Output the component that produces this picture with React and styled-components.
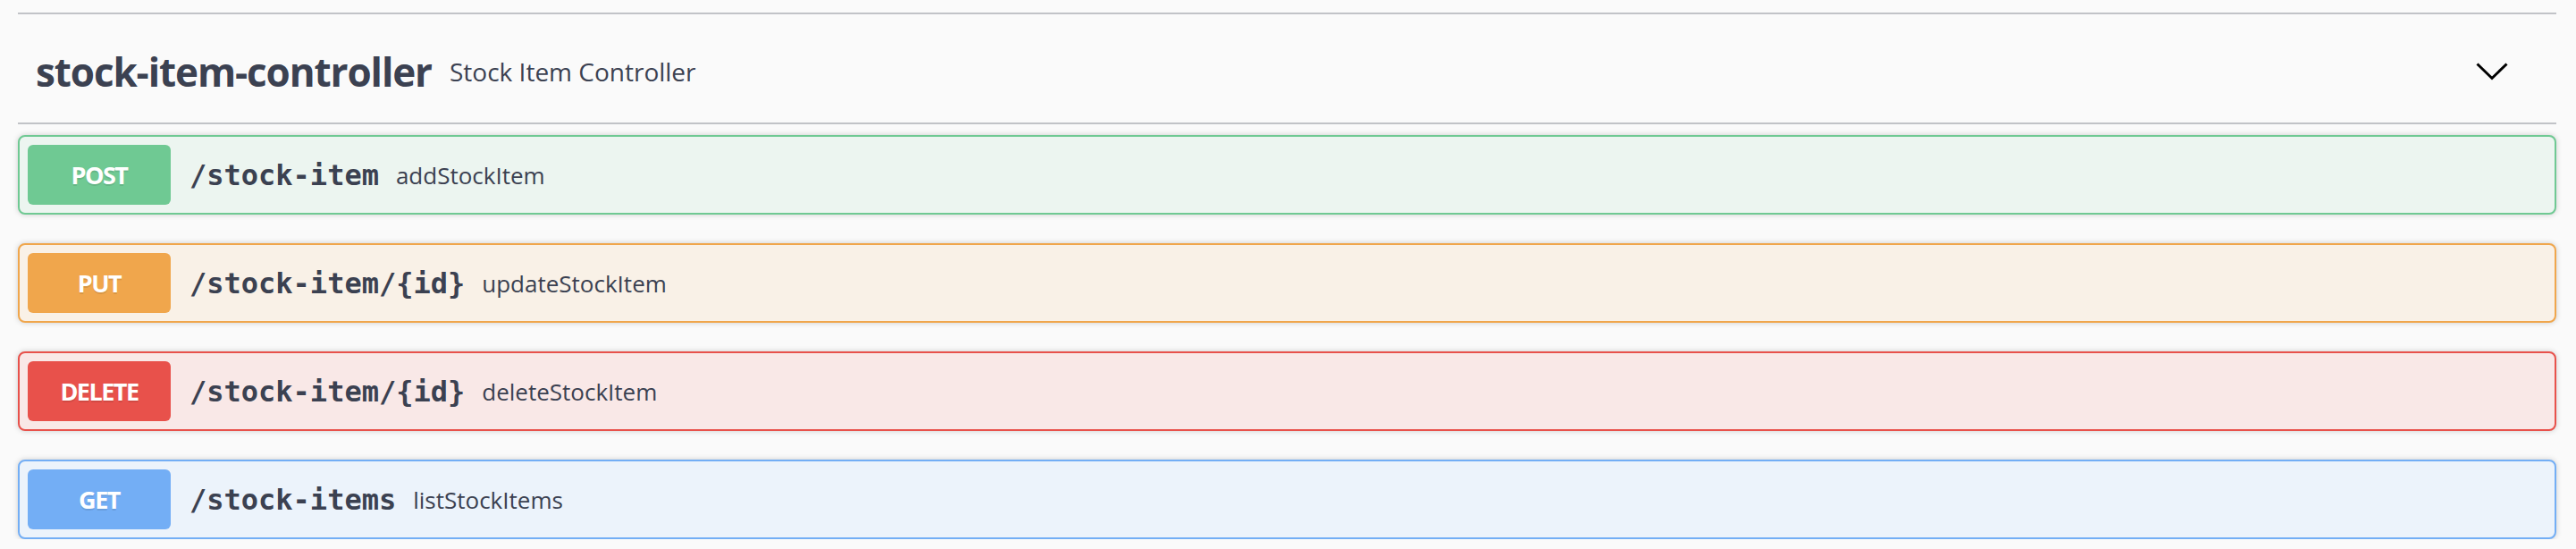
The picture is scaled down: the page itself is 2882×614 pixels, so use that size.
import React from 'react';
import styled, { createGlobalStyle } from 'styled-components';

const GlobalStyle = createGlobalStyle`
  html, body {
    margin: 0;
    padding: 0;
    background: #fafafa;
  }
`;

const methods = {
  post: { badge: '#6fc993', border: '#6fc993', bg: '#ecf5f0' },
  put: { badge: '#f0a64c', border: '#f0a64c', bg: '#f9f1e7' },
  delete: { badge: '#e8514b', border: '#e8514b', bg: '#f9e8e7' },
  get: { badge: '#73aef5', border: '#73aef5', bg: '#ecf3fb' },
};

const operations = [
  { method: 'post', label: 'POST', path: '/stock-item', summary: 'addStockItem' },
  { method: 'put', label: 'PUT', path: '/stock-item/{id}', summary: 'updateStockItem' },
  { method: 'delete', label: 'DELETE', path: '/stock-item/{id}', summary: 'deleteStockItem' },
  { method: 'get', label: 'GET', path: '/stock-items', summary: 'listStockItems' },
];

const Page = styled.div`
  padding: 14px 22px 0 20px;
`;

const TagHeader = styled.div`
  display: flex;
  align-items: center;
  box-sizing: border-box;
  height: 125px;
  padding: 6px 0 0 20px;
  border-top: 2px solid #c1c3c7;
  border-bottom: 2px solid #c1c3c7;
`;

const TagName = styled.h4`
  margin: 0;
  font-family: 'Open Sans', sans-serif;
  font-weight: 700;
  font-size: 44px;
  letter-spacing: -1.1px;
  line-height: 1;
  color: #3b4151;
`;

const TagDesc = styled.small`
  margin-left: 20px;
  font-family: 'Open Sans', sans-serif;
  font-size: 28px;
  color: #3b4151;
`;

const ExpandButton = styled.button`
  margin-left: auto;
  margin-right: 54px;
  padding: 0;
  border: none;
  background: none;
  display: flex;
  align-items: center;
`;

const Ops = styled.div`
  display: flex;
  flex-direction: column;
  gap: 32px;
  margin-top: 12px;
`;

const Block = styled.div`
  display: flex;
  align-items: center;
  padding: 9px;
  border: 2px solid ${p => methods[p.$method].border};
  background: ${p => methods[p.$method].bg};
  border-radius: 8px;
  box-shadow: 0 0 6px rgba(0, 0, 0, 0.19);
`;

const Badge = styled.span`
  display: flex;
  align-items: center;
  justify-content: center;
  width: 160px;
  height: 67px;
  border-radius: 6px;
  background: ${p => methods[p.$method].badge};
  color: #fff;
  font-family: 'Open Sans', sans-serif;
  font-weight: 700;
  font-size: 27px;
  letter-spacing: -1.5px;
  text-shadow: 0 2px 0 rgba(0, 0, 0, 0.1);
`;

const Path = styled.span`
  margin-left: 21px;
  font-family: 'DejaVu Sans Mono', 'Liberation Mono', monospace;
  font-weight: 700;
  font-size: 32px;
  color: #3b4151;
`;

const Summary = styled.span`
  margin-left: 19px;
  font-family: 'Open Sans', sans-serif;
  font-size: 26px;
  color: #3b4151;
`;

const Chevron = () => (
  <svg width="36" height="20" viewBox="0 0 36 20">
    <polyline points="1.5,1.5 18,17.5 34.5,1.5" fill="none" stroke="#000" strokeWidth="3" />
  </svg>
);

export default function App() {
  return (
    <Page>
      <GlobalStyle />
      <TagHeader>
        <TagName>stock-item-controller</TagName>
        <TagDesc>Stock Item Controller</TagDesc>
        <ExpandButton>
          <Chevron />
        </ExpandButton>
      </TagHeader>
      <Ops>
        {operations.map((op, i) => (
          <Block key={i} $method={op.method}>
            <Badge $method={op.method}>{op.label}</Badge>
            <Path>{op.path}</Path>
            <Summary>{op.summary}</Summary>
          </Block>
        ))}
      </Ops>
    </Page>
  );
}
